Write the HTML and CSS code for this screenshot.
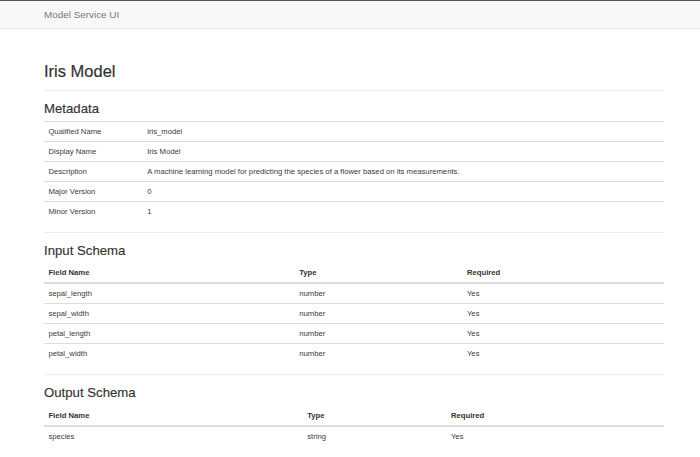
FILE: index.html
```html
<!DOCTYPE html>
<html lang="en">
<head>
<meta charset="utf-8">
<title>Model Service UI</title>
<link rel="stylesheet" href="styles.css">
</head>
<body>
<nav class="navbar">
  <div class="navbar-inner">
    <span class="brand">Model Service UI</span>
  </div>
</nav>
<main class="container">
  <div class="page-header">
    <h1 class="title">Iris Model</h1>
  </div>

  <section class="section">
    <h3 class="section-title meta-title">Metadata</h3>
    <table class="table meta-table">
      <tbody>
        <tr><td class="meta-key">Qualified Name</td><td>iris_model</td></tr>
        <tr><td class="meta-key">Display Name</td><td>Iris Model</td></tr>
        <tr><td class="meta-key">Description</td><td>A machine learning model for predicting the species of a flower based on its measurements.</td></tr>
        <tr><td class="meta-key">Major Version</td><td>0</td></tr>
        <tr><td class="meta-key">Minor Version</td><td>1</td></tr>
      </tbody>
    </table>
  </section>
  <hr class="divider">

  <section class="section">
    <h3 class="section-title">Input Schema</h3>
    <table class="table input-table">
      <thead>
        <tr><th class="col-name">Field Name</th><th class="col-type">Type</th><th>Required</th></tr>
      </thead>
      <tbody>
        <tr><td>sepal_length</td><td>number</td><td>Yes</td></tr>
        <tr><td>sepal_width</td><td>number</td><td>Yes</td></tr>
        <tr><td>petal_length</td><td>number</td><td>Yes</td></tr>
        <tr><td>petal_width</td><td>number</td><td>Yes</td></tr>
      </tbody>
    </table>
  </section>
  <hr class="divider">

  <section class="section">
    <h3 class="section-title">Output Schema</h3>
    <table class="table output-table">
      <thead>
        <tr><th class="col-name">Field Name</th><th class="col-type">Type</th><th>Required</th></tr>
      </thead>
      <tbody>
        <tr><td>species</td><td>string</td><td>Yes</td></tr>
      </tbody>
    </table>
  </section>
  <hr class="divider">
</main>
</body>
</html>
```
FILE: styles.css
```css
html, body {
  margin: 0;
  padding: 0;
  background: #fff;
}

body {
  font-family: "Liberation Sans", Arial, Helvetica, sans-serif;
  font-size: 7.7px;
  line-height: 11px;
  color: #3a3a3a;
}

.navbar {
  border-top: 1px solid #555;
  background: #f8f8f8;
  border-bottom: 1px solid #e7e7e7;
}

.navbar-inner {
  height: 27px;
  padding-left: 44px;
  display: flex;
  align-items: center;
}

.brand {
  font-size: 9.9px;
  color: #777;
  line-height: 11px;
}

.container {
  padding: 0 36px 0 44px;
}

.page-header {
  margin-top: 33px;
  padding-bottom: 10px;
  border-bottom: 1px solid #eee;
}

.title {
  margin: 0;
  font-size: 16.5px;
  line-height: 18px;
  font-weight: 500;
  color: #333;
  -webkit-text-stroke: 0.2px #333;
}

.section-title {
  margin: 11px 0 5px;
  font-size: 13.2px;
  line-height: 14.5px;
  font-weight: 500;
  color: #333;
  -webkit-text-stroke: 0.15px #333;
}

.meta-title {
  margin-bottom: 4px;
}

.table {
  width: 100%;
  border-collapse: collapse;
  border-spacing: 0;
  margin-bottom: 11px;
}

.table th,
.table td {
  padding: 4px 4.4px;
  line-height: 11px;
  text-align: left;
  vertical-align: top;
}

.table td {
  border-top: 1px solid #ddd;
}

.table th {
  font-weight: bold;
  color: #333;
  border-bottom: 2px solid #ddd;
}

.meta-key {
  width: 90px;
}

.input-table .col-name { width: 242px; }
.input-table .col-type { width: 159px; }

.output-table .col-name { width: 250px; }
.output-table .col-type { width: 135px; }

.divider {
  margin: 0;
  border: 0;
  border-top: 1px solid #eee;
  height: 0;
}
```
